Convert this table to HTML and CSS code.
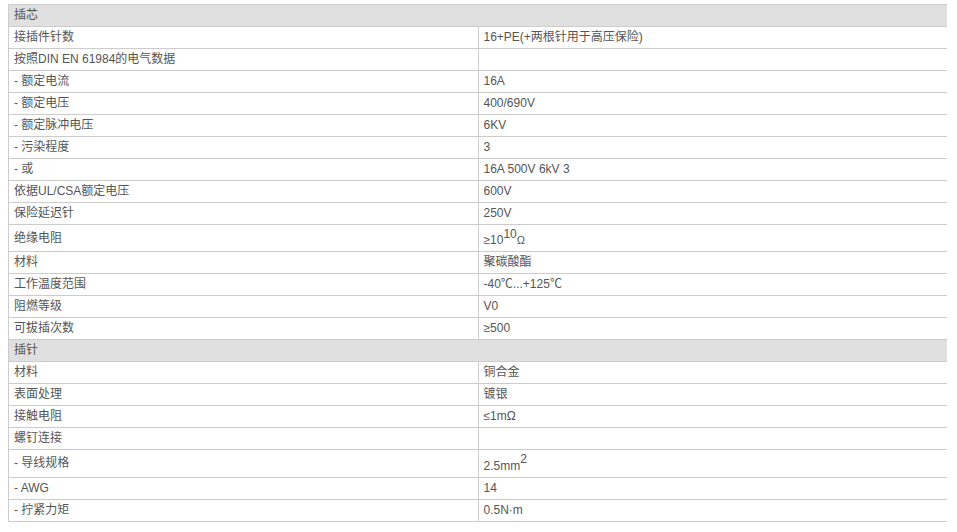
FILE: index.html
```html
<!DOCTYPE html>
<html lang="zh-CN">
<head>
<meta charset="utf-8">
<link rel="stylesheet" href="styles.css">
</head>
<body>
<table class="spec">
  <tr class="group"><td colspan="2">插芯</td></tr>
  <tr><td>接插件针数</td><td>16+PE(+两根针用于高压保险)</td></tr>
  <tr><td>按照DIN EN 61984的电气数据</td><td></td></tr>
  <tr><td>- 额定电流</td><td>16A</td></tr>
  <tr><td>- 额定电压</td><td>400/690V</td></tr>
  <tr><td>- 额定脉冲电压</td><td>6KV</td></tr>
  <tr><td>- 污染程度</td><td>3</td></tr>
  <tr><td>- 或</td><td>16A 500V 6kV 3</td></tr>
  <tr><td>依据UL/CSA额定电压</td><td>600V</td></tr>
  <tr><td>保险延迟针</td><td>250V</td></tr>
  <tr><td>绝缘电阻</td><td>≥10<sup>10</sup><span class="ohm">Ω</span></td></tr>
  <tr><td>材料</td><td>聚碳酸酯</td></tr>
  <tr><td>工作温度范围</td><td>-40℃...+125℃</td></tr>
  <tr><td>阻燃等级</td><td>V0</td></tr>
  <tr><td>可拔插次数</td><td>≥500</td></tr>
  <tr class="group"><td colspan="2">插针</td></tr>
  <tr><td>材料</td><td>铜合金</td></tr>
  <tr><td>表面处理</td><td>镀银</td></tr>
  <tr><td>接触电阻</td><td>≤1mΩ</td></tr>
  <tr><td>螺钉连接</td><td></td></tr>
  <tr><td>- 导线规格</td><td>2.5mm<sup class="sq">2</sup></td></tr>
  <tr><td>- AWG</td><td>14</td></tr>
  <tr><td>- 拧紧力矩</td><td>0.5N·m</td></tr>
</table>
</body>
</html>
```

FILE: styles.css
```css
html, body {
  background: #ffffff;
}
body {
  margin: 4px 10px 0 8px;
  font-family: "Liberation Sans", "Noto Sans CJK SC", sans-serif;
  font-size: 12px;
  color: #555555;
}
.spec {
  width: 940px;
  border-collapse: collapse;
  table-layout: fixed;
}
.spec td {
  width: 50%;
  border: 1px solid #cccccc;
  padding: 3px 5px;
  line-height: 15px;
  height: 15px;
  vertical-align: middle;
  text-align: left;
}
.spec .group td {
  background: #e0e0e0;
}
.spec sup {
  font-size: 12px;
  line-height: 12px;
  vertical-align: 6px;
}
.spec sup.sq {
  font-size: 12px;
  vertical-align: 7px;
}
.ohm {
  font-size: 11px;
}
```
